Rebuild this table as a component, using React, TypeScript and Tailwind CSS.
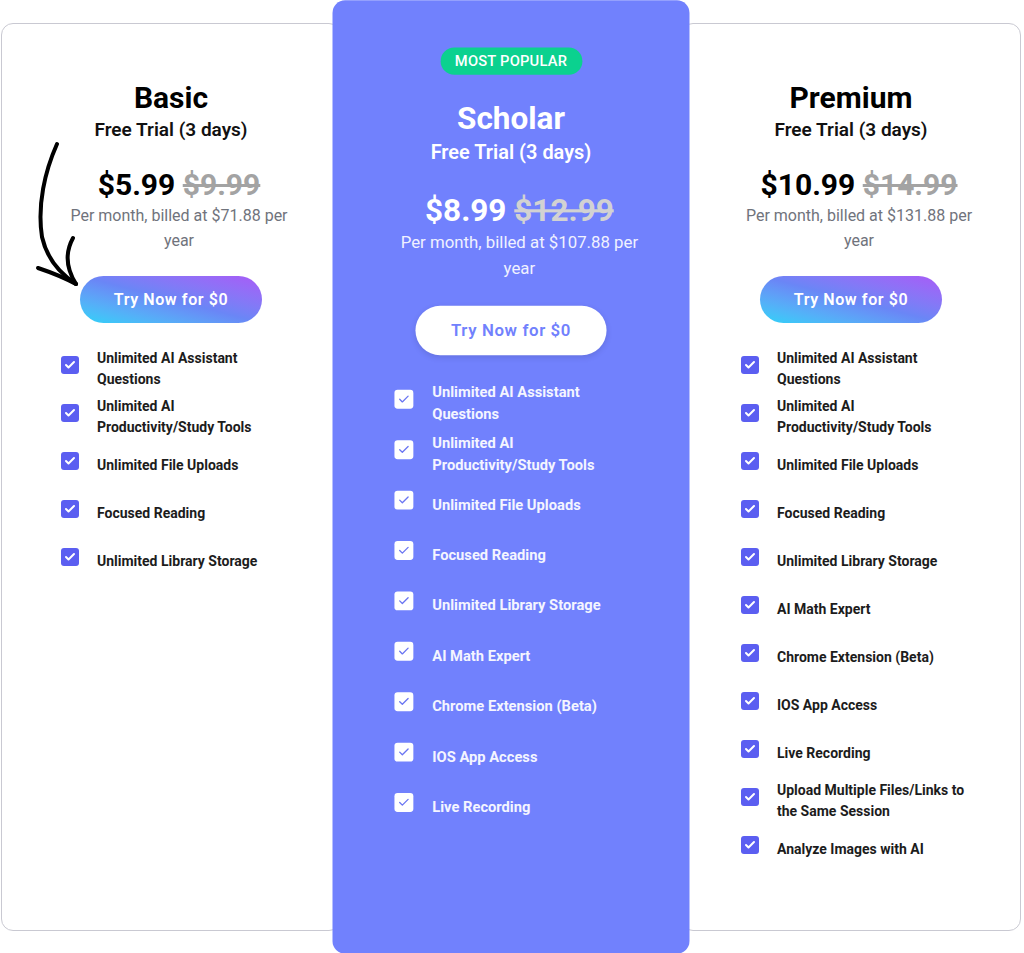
import { Check } from 'lucide-react'

type Plan = {
  name: string
  price: string
  oldPrice: string
  billed: string
  features: string[]
  popular?: boolean
}

const base = [
  'Unlimited AI Assistant Questions',
  'Unlimited AI Productivity/Study Tools',
  'Unlimited File Uploads',
  'Focused Reading',
  'Unlimited Library Storage',
]

const scholar = [...base, 'AI Math Expert', 'Chrome Extension (Beta)', 'IOS App Access', 'Live Recording']

const plans: Plan[] = [
  { name: 'Basic', price: '$5.99', oldPrice: '$9.99', billed: 'Per month, billed at $71.88 per year', features: base },
  {
    name: 'Scholar',
    price: '$8.99',
    oldPrice: '$12.99',
    billed: 'Per month, billed at $107.88 per year',
    features: scholar,
    popular: true,
  },
  {
    name: 'Premium',
    price: '$10.99',
    oldPrice: '$14.99',
    billed: 'Per month, billed at $131.88 per year',
    features: [...scholar, 'Upload Multiple Files/Links to the Same Session', 'Analyze Images with AI'],
  },
]

function Arrow() {
  return (
    <svg
      className="absolute left-[27px] top-[115px] pointer-events-none"
      width="60"
      height="160"
      viewBox="0 0 60 160"
      fill="none"
      stroke="#000"
      strokeLinecap="round"
      strokeLinejoin="round"
    >
      <path d="M28,5 C16,32 8,66 13,98 C18,120 30,134 47,145" strokeWidth="4" />
      <path d="M9,129 C21,133 34,138 47,145" strokeWidth="4" />
      <path d="M44,99 C38,110 35,126 47,145" strokeWidth="4" />
    </svg>
  )
}

function PlanCard({ plan }: { plan: Plan }) {
  const pop = plan.popular
  return (
    <div
      className={
        pop
          ? 'relative z-10 flex h-[908px] scale-105 flex-col items-center rounded-xl bg-[#7181fd] pt-[45px]'
          : 'relative flex h-[908px] flex-col items-center rounded-xl border border-[#c9c9d2] bg-white pt-[56px]'
      }
    >
      {plan.name === 'Basic' && <Arrow />}
      {pop && (
        <div className="mb-[24px] flex h-[26px] w-[135px] items-center justify-center rounded-full bg-[#0bd18f] text-[14px] font-medium tracking-[0.2px] text-white">
          MOST POPULAR
        </div>
      )}
      <h2 className={`text-[30px] leading-[36px] font-bold ${pop ? 'text-white' : 'text-black'}`}>{plan.name}</h2>
      <p className={`text-[19px] leading-[28px] font-semibold ${pop ? 'text-white' : 'text-[#111]'}`}>
        Free Trial (3 days)
      </p>
      <div className="flex flex-col items-center pl-[16px]">
        <div className="mt-[23px] text-[30px] leading-[36px] font-bold">
          <span className={pop ? 'text-white' : 'text-black'}>{plan.price}</span>{' '}
          <span className={`line-through decoration-[3px] ${pop ? 'text-[#d2d2d2]' : 'text-[#a3a3a3]'}`}>
            {plan.oldPrice}
          </span>
        </div>
        <p className={`w-[244px] text-center text-[16px] leading-[25px] ${pop ? 'text-[#f0f1ff]' : 'text-[#70737c]'}`}>
          {plan.billed}
        </p>
      </div>
      <button
        className={
          pop
            ? 'mt-[23px] h-[47px] w-[182px] rounded-full bg-white text-[16px] font-semibold tracking-[0.6px] text-[#7181fd] shadow-[0_2px_6px_rgba(0,0,0,0.12)]'
            : 'mt-[23px] h-[47px] w-[182px] rounded-full bg-linear-to-tr from-[#27d2f8] via-[#6a86f6] to-[#a75af7] text-[16px] font-semibold tracking-[0.6px] text-white'
        }
      >
        Try Now for $0
      </button>
      <ul className="mt-[22px] flex w-full flex-col pl-[59px]">
        {plan.features.map((f) => (
          <li key={f} className="flex h-[48px] items-center gap-[18px]">
            <span
              className={`flex h-[18px] w-[18px] shrink-0 -translate-y-[4px] items-center justify-center rounded-[3px] ${
                pop ? 'bg-white text-[#6a75f2]' : 'bg-[#5b5ef1] text-white'
              }`}
            >
              <Check size={12} strokeWidth={pop ? 2.5 : 4} />
            </span>
            <span
              className={`w-[196px] text-[14px] leading-[21px] font-bold ${pop ? 'text-[#f4f5ff]' : 'text-[#1c1c1c]'}`}
            >
              {f}
            </span>
          </li>
        ))}
      </ul>
    </div>
  )
}

export default function App() {
  return (
    <div className="h-[953px] w-[1024px] overflow-hidden bg-white px-[1px] py-[23px] font-['Roboto',sans-serif]">
      <div className="grid w-[1020px] grid-cols-3">
        {plans.map((p) => (
          <PlanCard key={p.name} plan={p} />
        ))}
      </div>
    </div>
  )
}
